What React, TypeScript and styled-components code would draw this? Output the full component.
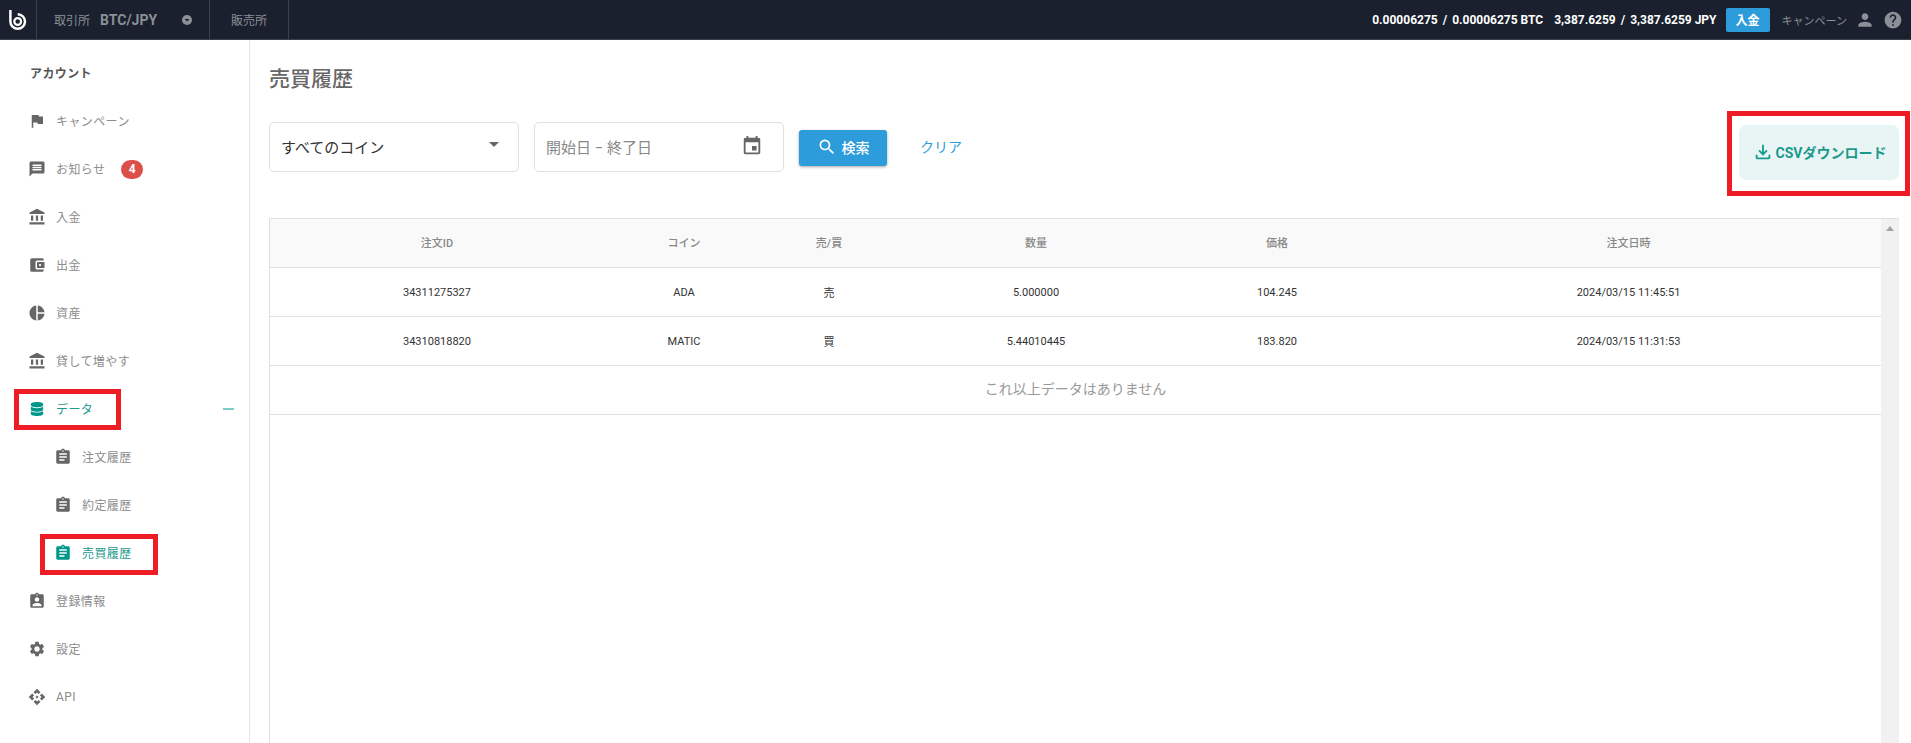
import styled, { createGlobalStyle } from "styled-components"
import {
  MdAccountBalance,
  MdAccountBalanceWallet,
  MdApi,
  MdArrowDropDown,
  MdAssignment,
  MdAssignmentInd,
  MdEvent,
  MdFlag,
  MdHelp,
  MdMessage,
  MdOutlineFileDownload,
  MdPerson,
  MdPieChart,
  MdSearch,
  MdSettings,
} from "react-icons/md"
import { FaDatabase } from "react-icons/fa"

const GlobalStyle = createGlobalStyle`
  html, body {
    margin: 0;
    height: 100%;
    overflow: hidden;
    background: #fff;
    font-family: Roboto, "Noto Sans CJK JP", sans-serif;
  }
  * { box-sizing: border-box; }
`

const rows = [
  { id: "34311275327", coin: "ADA", side: "売", amount: "5.000000", price: "104.245", date: "2024/03/15 11:45:51" },
  { id: "34310818820", coin: "MATIC", side: "買", amount: "5.44010445", price: "183.820", date: "2024/03/15 11:31:53" },
]

const Logo = () => (
  <svg width="36" height="39" viewBox="0 0 36 39" fill="none" stroke="#fff">
    <path d="M10.4 10v11.5a7.3 7.3 0 1 0 7.3-7.3" strokeWidth="2.5" />
    <circle cx="17.7" cy="21.5" r="3.4" strokeWidth="2.2" />
  </svg>
)

const MarketToggle = () => (
  <svg width="12" height="12" viewBox="0 0 12 12">
    <circle cx="6" cy="6" r="5" fill="#8b8f96" />
    <path d="M3.6 5h4.8L6 7.6z" fill="#1a202e" />
  </svg>
)

export default function App() {
  return (
    <>
      <GlobalStyle />
      <Page>
        <TopBar>
          <LogoCell>
            <Logo />
          </LogoCell>
          <MarketCell>
            取引所
            <Pair>BTC/JPY</Pair>
            <ToggleSlot>
              <MarketToggle />
            </ToggleSlot>
          </MarketCell>
          <ShopCell>販売所</ShopCell>
          <TopRight>
            <Balance>
              0.00006275<Slash>/</Slash>0.00006275 BTC
            </Balance>
            <Balance>
              3,387.6259<Slash>/</Slash>3,387.6259 JPY
            </Balance>
            <DepositButton>入金</DepositButton>
            <TopLink>キャンペーン</TopLink>
            <TopIcon>
              <MdPerson size={20} />
            </TopIcon>
            <TopIcon>
              <MdHelp size={20} />
            </TopIcon>
          </TopRight>
        </TopBar>
        <Body>
          <Sidebar>
            <SideHeading>アカウント</SideHeading>
            <NavRow>
              <MdFlag size={18} />
              <NavLabel>キャンペーン</NavLabel>
            </NavRow>
            <NavRow>
              <MdMessage size={18} />
              <NavLabel>お知らせ</NavLabel>
              <Badge>4</Badge>
            </NavRow>
            <NavRow>
              <MdAccountBalance size={18} />
              <NavLabel>入金</NavLabel>
            </NavRow>
            <NavRow>
              <MdAccountBalanceWallet size={18} />
              <NavLabel>出金</NavLabel>
            </NavRow>
            <NavRow>
              <MdPieChart size={18} />
              <NavLabel>資産</NavLabel>
            </NavRow>
            <NavRow>
              <MdAccountBalance size={18} />
              <NavLabel>貸して増やす</NavLabel>
            </NavRow>
            <NavRow $active>
              <DataIcon>
                <FaDatabase size={14} />
              </DataIcon>
              <NavLabel>データ</NavLabel>
              <Collapse />
              <DataMark />
            </NavRow>
            <NavRow $sub>
              <MdAssignment size={18} />
              <NavLabel>注文履歴</NavLabel>
            </NavRow>
            <NavRow $sub>
              <MdAssignment size={18} />
              <NavLabel>約定履歴</NavLabel>
            </NavRow>
            <NavRow $sub $active>
              <MdAssignment size={18} />
              <NavLabel>売買履歴</NavLabel>
              <HistoryMark />
            </NavRow>
            <NavRow>
              <MdAssignmentInd size={18} />
              <NavLabel>登録情報</NavLabel>
            </NavRow>
            <NavRow>
              <MdSettings size={18} />
              <NavLabel>設定</NavLabel>
            </NavRow>
            <NavRow>
              <MdApi size={18} />
              API
            </NavRow>
          </Sidebar>
          <Main>
            <Title>売買履歴</Title>
            <Filters>
              <SelectBox>
                すべてのコイン
                <MdArrowDropDown size={24} />
              </SelectBox>
              <DateBox>
                開始日 − 終了日
                <MdEvent size={22} />
              </DateBox>
              <SearchButton>
                <MdSearch size={20} />
                検索
              </SearchButton>
              <ClearLink>クリア</ClearLink>
              <CsvWrap>
                <CsvButton>
                  <MdOutlineFileDownload size={22} />
                  CSVダウンロード
                </CsvButton>
                <CsvMark />
              </CsvWrap>
            </Filters>
            <TableFrame>
              <TableArea>
                <HeadRow>
                  <span>注文ID</span>
                  <span>コイン</span>
                  <span>売/買</span>
                  <span>数量</span>
                  <span>価格</span>
                  <span>注文日時</span>
                </HeadRow>
                {rows.map((row) => (
                  <DataRow key={row.id}>
                    <span>{row.id}</span>
                    <span>{row.coin}</span>
                    <span>{row.side}</span>
                    <span>{row.amount}</span>
                    <span>{row.price}</span>
                    <span>{row.date}</span>
                  </DataRow>
                ))}
                <EndRow>これ以上データはありません</EndRow>
              </TableArea>
              <ScrollTrack>
                <ScrollArrow />
              </ScrollTrack>
            </TableFrame>
          </Main>
        </Body>
      </Page>
    </>
  )
}

const Page = styled.div`
  display: flex;
  flex-direction: column;
  height: 100vh;
  overflow: hidden;
`
const TopBar = styled.header`
  display: flex;
  align-items: stretch;
  flex: 0 0 40px;
  background: #1a202e;
  border-bottom: 1px solid #3a404c;
  color: #8b8f96;
  font-size: 12px;
`
const LogoCell = styled.div`
  display: flex;
  flex: 0 0 37px;
  border-right: 1px solid #3a404c;
`
const MarketCell = styled.div`
  display: flex;
  align-items: center;
  flex: 0 0 173px;
  padding-left: 17px;
  border-right: 1px solid #3a404c;
`
const Pair = styled.span`
  margin-left: 10px;
  font-size: 14px;
  font-weight: 700;
`
const ToggleSlot = styled.span`
  display: flex;
  margin-left: 24px;
`
const ShopCell = styled.div`
  display: flex;
  align-items: center;
  justify-content: center;
  flex: 0 0 79px;
  border-right: 1px solid #3a404c;
`
const TopRight = styled.div`
  display: flex;
  align-items: center;
  margin-left: auto;
  padding-right: 8px;
`
const Balance = styled.span`
  margin-right: 11px;
  color: #fff;
  font-size: 12px;
  font-weight: 700;
  white-space: nowrap;
  & + & {
    margin-right: 9px;
  }
`
const Slash = styled.span`
  margin: 0 5px;
`
const DepositButton = styled.div`
  display: flex;
  align-items: center;
  justify-content: center;
  width: 44px;
  height: 24px;
  border-radius: 2px;
  background: #2d9cdb;
  color: #fff;
  font-size: 12px;
  font-weight: 700;
`
const TopLink = styled.span`
  margin-left: 12px;
  font-size: 11px;
  white-space: nowrap;
`
const TopIcon = styled.span`
  display: flex;
  margin-left: 8px;
`
const Body = styled.div`
  display: flex;
  flex: 1;
  min-height: 0;
`
const Sidebar = styled.nav`
  flex: 0 0 250px;
  padding-top: 9px;
  border-right: 1px solid #e4e4e4;
`
const SideHeading = styled.div`
  display: flex;
  align-items: center;
  height: 48px;
  padding: 0 0 2px 30px;
  color: #555;
  font-size: 12px;
  font-weight: 700;
  letter-spacing: 0.4px;
`
const NavRow = styled.div<{ $active?: boolean; $sub?: boolean }>`
  position: relative;
  display: flex;
  align-items: center;
  gap: 10px;
  height: 48px;
  padding: 0 15px 0 ${(p) => (p.$sub ? 54 : 28)}px;
  color: ${(p) => (p.$active ? "#1a9a8c" : "#8c8c8c")};
  font-size: 12px;
  letter-spacing: 0.4px;
  svg {
    flex: none;
    color: ${(p) => (p.$active ? "#009688" : "#666")};
  }
`
const NavLabel = styled.span`
  margin-bottom: 2px;
`
const DataIcon = styled.span`
  display: flex;
  justify-content: center;
  width: 18px;
`
const Badge = styled.span`
  display: flex;
  align-items: center;
  justify-content: center;
  width: 22px;
  height: 19px;
  margin-left: 6px;
  border-radius: 10px;
  background: #dd5049;
  color: #fff;
  font-size: 12px;
  font-weight: 700;
`
const Collapse = styled.span`
  width: 11px;
  height: 2px;
  margin-left: auto;
  background: #80cbc4;
`
const RedMark = styled.span`
  position: absolute;
  border: 5px solid #ee1c25;
  pointer-events: none;
`
const DataMark = styled(RedMark)`
  top: 4px;
  left: 14px;
  width: 107px;
  height: 41px;
`
const HistoryMark = styled(RedMark)`
  top: 5px;
  left: 40px;
  width: 118px;
  height: 41px;
`
const CsvMark = styled(RedMark)`
  top: -14px;
  right: -11px;
  bottom: -16px;
  left: -12px;
`
const Main = styled.main`
  flex: 1;
  min-width: 0;
  padding: 24px 12px 0 19px;
`
const Title = styled.h1`
  margin: 0 0 28px;
  color: #666;
  font-size: 21px;
  font-weight: 500;
  line-height: 30px;
`
const Filters = styled.div`
  display: flex;
  align-items: flex-start;
  height: 58px;
  margin-bottom: 38px;
`
const FieldBox = styled.div`
  display: flex;
  align-items: center;
  justify-content: space-between;
  width: 250px;
  height: 50px;
  border: 1px solid #e0e0e0;
  border-radius: 5px;
  font-size: 15px;
`
const SelectBox = styled(FieldBox)`
  padding: 0 12px 2px 11px;
  color: #333;
  svg {
    margin-bottom: 4px;
    color: #666;
  }
`
const DateBox = styled(FieldBox)`
  margin-left: 15px;
  padding: 0 20px 2px 11px;
  color: #888;
  svg {
    color: #666;
  }
`
const SearchButton = styled.div`
  display: flex;
  align-items: center;
  justify-content: center;
  gap: 5px;
  width: 88px;
  height: 36px;
  margin: 8px 0 0 15px;
  padding-bottom: 2px;
  border-radius: 3px;
  background: #2d9cdb;
  box-shadow: 0 1px 3px rgba(0, 0, 0, 0.35);
  color: #fff;
  font-size: 14px;
  font-weight: 500;
`
const ClearLink = styled.span`
  margin: 14px 0 0 33px;
  color: #2d9cdb;
  font-size: 14px;
`
const CsvWrap = styled.div`
  position: relative;
  margin: 3px 0 0 auto;
`
const CsvButton = styled.div`
  display: flex;
  align-items: center;
  justify-content: center;
  gap: 2px;
  width: 160px;
  height: 55px;
  padding-bottom: 2px;
  border-radius: 7px;
  background: #e9f5f5;
  color: #1a9a8c;
  font-size: 14px;
  font-weight: 700;
`
const TableFrame = styled.div`
  display: flex;
  height: 600px;
  border: 1px solid #e0e0e0;
  border-right: 0;
`
const TableArea = styled.div`
  flex: 1;
  min-width: 0;
`
const columns = "334px 160px 130px 284px 198px 1fr"
const HeadRow = styled.div`
  display: grid;
  grid-template-columns: ${columns};
  align-items: center;
  height: 49px;
  padding-bottom: 2px;
  border-bottom: 1px solid #e0e0e0;
  background: #f9f9f9;
  color: #888;
  font-size: 11px;
  font-weight: 500;
  text-align: center;
`
const DataRow = styled.div`
  display: grid;
  grid-template-columns: ${columns};
  align-items: center;
  height: 49px;
  border-bottom: 1px solid #e0e0e0;
  color: #333;
  font-size: 11px;
  text-align: center;
`
const EndRow = styled.div`
  display: flex;
  align-items: center;
  justify-content: center;
  height: 49px;
  padding-bottom: 4px;
  border-bottom: 1px solid #e0e0e0;
  color: #999;
  font-size: 14px;
`
const ScrollTrack = styled.div`
  flex: 0 0 18px;
  padding: 7px 0 0 5px;
  background: #f1f1f1;
`
const ScrollArrow = styled.div`
  width: 0;
  height: 0;
  border-right: 4px solid transparent;
  border-bottom: 5px solid #a3a3a3;
  border-left: 4px solid transparent;
`
